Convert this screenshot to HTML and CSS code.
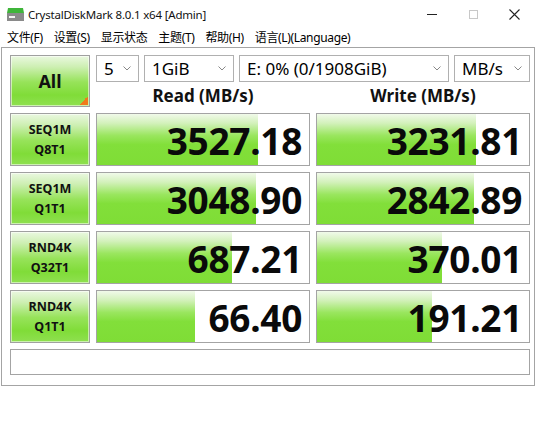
FILE: index.html
```html
<!DOCTYPE html>
<html lang="zh">
<head>
<meta charset="utf-8">
<title>CrystalDiskMark 8.0.1 x64 [Admin]</title>
<link rel="stylesheet" href="styles.css">
</head>
<body>
<div class="window">
  <div class="titlebar">
    <svg class="app-icon" width="17" height="15" viewBox="0 0 17 15">
      <path d="M1 1 H16 L17 6 H0 Z" fill="#3fb53a"/>
      <rect x="0" y="6" width="17" height="8" fill="#8a8a8a"/>
      <rect x="2" y="9" width="6" height="2" fill="#f4f4f4"/>
    </svg>
    <span class="title">CrystalDiskMark 8.0.1 x64 [Admin]</span>
    <div class="controls">
      <span class="ctl"><svg width="11" height="11" viewBox="0 0 11 11"><path d="M0 5.5 H10" stroke="#222" stroke-width="1"/></svg></span>
      <span class="ctl"><svg width="11" height="11" viewBox="0 0 11 11"><rect x="1.5" y="1.5" width="8" height="8" fill="none" stroke="#c8c8c8" stroke-width="1"/></svg></span>
      <span class="ctl"><svg width="11" height="11" viewBox="0 0 11 11"><path d="M0.5 0.5 L10.5 10.5 M10.5 0.5 L0.5 10.5" stroke="#222" stroke-width="1.1"/></svg></span>
    </div>
  </div>
  <div class="menubar">
    <span class="menu-item">文件(F)</span>
    <span class="menu-item">设置(S)</span>
    <span class="menu-item">显示状态</span>
    <span class="menu-item">主题(T)</span>
    <span class="menu-item">帮助(H)</span>
    <span class="menu-item">语言(L)(Language)</span>
  </div>
  <div class="client">
    <div class="top">
      <div class="btn all">All</div>
      <div class="top-right">
        <div class="selects">
          <div class="select s-count"><span>5</span><svg class="chev" width="8" height="5" viewBox="0 0 8 5"><path d="M0.5 0.5 L4 4 L7.5 0.5" fill="none" stroke="#888" stroke-width="1"/></svg></div>
          <div class="select s-size"><span>1GiB</span><svg class="chev" width="8" height="5" viewBox="0 0 8 5"><path d="M0.5 0.5 L4 4 L7.5 0.5" fill="none" stroke="#888" stroke-width="1"/></svg></div>
          <div class="select s-drive"><span>E: 0% (0/1908GiB)</span><svg class="chev" width="8" height="5" viewBox="0 0 8 5"><path d="M0.5 0.5 L4 4 L7.5 0.5" fill="none" stroke="#888" stroke-width="1"/></svg></div>
          <div class="select s-unit"><span>MB/s</span><svg class="chev" width="8" height="5" viewBox="0 0 8 5"><path d="M0.5 0.5 L4 4 L7.5 0.5" fill="none" stroke="#888" stroke-width="1"/></svg></div>
        </div>
        <div class="headers">
          <div class="head">Read (MB/s)</div>
          <div class="head">Write (MB/s)</div>
        </div>
      </div>
    </div>
    <div class="row">
      <div class="btn label">SEQ1M<br>Q8T1</div>
      <div class="cell" style="background-size: 161px 100%">3527.18</div>
      <div class="cell" style="background-size: 159px 100%">3231.81</div>
    </div>
    <div class="row">
      <div class="btn label">SEQ1M<br>Q1T1</div>
      <div class="cell" style="background-size: 159px 100%">3048.90</div>
      <div class="cell" style="background-size: 157px 100%">2842.89</div>
    </div>
    <div class="row">
      <div class="btn label">RND4K<br>Q32T1</div>
      <div class="cell" style="background-size: 135px 100%">687.21</div>
      <div class="cell" style="background-size: 125px 100%">370.01</div>
    </div>
    <div class="row">
      <div class="btn label">RND4K<br>Q1T1</div>
      <div class="cell" style="background-size: 98px 100%">66.40</div>
      <div class="cell" style="background-size: 115px 100%">191.21</div>
    </div>
    <div class="message"></div>
  </div>
</div>
</body>
</html>
```

FILE: styles.css
```css
* { box-sizing: border-box; }

html, body {
  margin: 0;
  padding: 0;
  background: #ffffff;
}

body {
  width: 540px;
  height: 424px;
  overflow: hidden;
  font-family: "Noto Sans", "Noto Sans CJK SC", sans-serif;
  color: #000;
}

.window {
  width: 535px;
}

.titlebar {
  height: 29px;
  display: flex;
  align-items: center;
  padding-left: 7px;
}

.app-icon {
  display: block;
  margin-right: 4px;
}

.title {
  font-size: 11.5px;
  letter-spacing: -0.2px;
  color: #111;
}

.controls {
  margin-left: auto;
  display: flex;
  height: 29px;
}

.ctl {
  width: 41px;
  height: 29px;
  display: flex;
  align-items: center;
  justify-content: center;
}

.ctl svg { display: block; }

.menubar {
  height: 18px;
  display: flex;
  align-items: center;
  gap: 11px;
  padding-left: 7px;
  font-size: 12px;
  font-family: "Noto Sans", "Noto Sans CJK SC", sans-serif;
  letter-spacing: -0.35px;
}

.menu-item {
  line-height: 18px;
  white-space: nowrap;
}

.client {
  margin-left: 1px;
  width: 534px;
  border: 1px solid #a4a4a4;
  padding: 7px 3px 10px 8px;
  display: flex;
  flex-direction: column;
  gap: 6px;
}

.top {
  display: flex;
  gap: 6px;
  height: 52px;
}

.btn {
  border: 1px solid #a0a0a0;
  box-shadow: inset 0 0 0 1px rgba(255, 255, 255, 0.55);
  display: flex;
  align-items: center;
  justify-content: center;
  text-align: center;
  font-weight: 700;
  color: #111;
  background: linear-gradient(to bottom, #eaf8e0 0%, #cdefb2 22%, #97e35a 52%, #80dc38 78%, #8fe050 100%);
}

.all {
  width: 80px;
  height: 52px;
  font-size: 18px;
  background:
    linear-gradient(to bottom right, transparent 50%, #f07a1c 50%) no-repeat right 1px bottom 1px / 9px 9px,
    linear-gradient(to bottom, #eaf8e0 0%, #cdefb2 22%, #97e35a 52%, #80dc38 78%, #8fe050 100%);
}

.top-right {
  width: 434px;
  display: flex;
  flex-direction: column;
}

.selects {
  display: flex;
  gap: 5px;
  height: 27px;
}

.select {
  height: 27px;
  border: 1px solid #b0b0b0;
  background: #fff;
  display: flex;
  align-items: center;
  justify-content: space-between;
  padding: 0 7px 0 7px;
  font-size: 17px;
  white-space: nowrap;
}

.select span { line-height: 25px; }

.chev { display: block; flex: none; }

.s-count { width: 43px; }
.s-size { width: 90px; }
.s-drive { width: 210px; }
.s-unit { width: 76px; }

.headers {
  height: 25px;
  display: grid;
  grid-template-columns: 214px 214px;
  gap: 6px;
  align-items: end;
}

.head {
  text-align: center;
  font-size: 17px;
  font-weight: 700;
  line-height: 22px;
  color: #111;
}

.row {
  display: grid;
  grid-template-columns: 80px 214px 214px;
  gap: 6px;
  height: 53px;
}

.label {
  font-size: 12.5px;
  line-height: 20px;
}

.cell {
  border: 1px solid #a4a4a4;
  background-color: #fff;
  background-image: linear-gradient(to bottom, #f1faea 0%, #d3f1bb 18%, #9ae65f 42%, #82df3a 60%, #7fdd36 100%);
  background-repeat: no-repeat;
  background-position: left top;
  display: flex;
  align-items: center;
  justify-content: flex-end;
  padding: 2px 7px 0 0;
  font-size: 37px;
  font-weight: 700;
  letter-spacing: -0.3px;
  color: #0a0a0a;
  line-height: 1;
}

.message {
  height: 26px;
  width: 520px;
  border: 1px solid #a4a4a4;
  background: #fff;
}
```
